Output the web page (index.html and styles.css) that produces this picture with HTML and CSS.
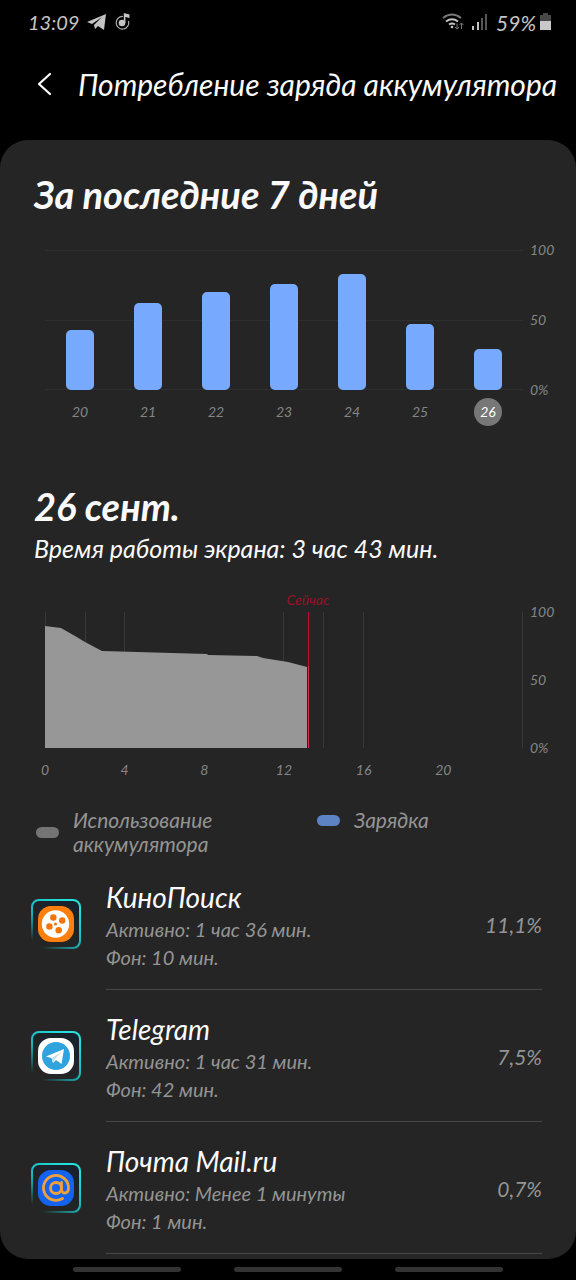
FILE: index.html
```html
<!DOCTYPE html>
<html lang="ru">
<head>
<meta charset="utf-8">
<meta name="viewport" content="width=device-width, initial-scale=1">
<title>Потребление заряда аккумулятора</title>
<link rel="stylesheet" href="styles.css">
</head>
<body>
<div class="status">
  <span class="clock">13:09</span>
  <svg class="s-icon" width="20" height="18" viewBox="0 0 20 18"><path d="M0 9 19 1 17 17 11 13 8 16 7 12 15 4 5 11Z" fill="#c4c4c4"/></svg>
  <svg class="s-icon" width="17" height="18" viewBox="0 0 17 18"><path d="M8 3.500A6.300 6.300 0 1 0 13.500 8" fill="none" stroke="#aaa" stroke-width="1.200"/><circle cx="7" cy="10" r="3.300" fill="#c4c4c4"/><path d="M8.800 10V0L14.500 1.500V5L10.400 4V10" fill="#c4c4c4"/></svg>
  <span class="spacer"></span>
  <svg class="s-icon" width="22" height="18" viewBox="0 0 22 18" fill="none" stroke-width="2"><path d="M1 5Q10-2 19 5" stroke="#777"/><path d="M4 8.500Q10 4 16 8.500" stroke="#c4c4c4"/><path d="M7 11.500Q10 9.500 13 11.500" stroke="#c4c4c4"/><circle cx="10" cy="14" r="1.300" fill="#c4c4c4"/><path d="M15 10.500V16M13 14 15 16.200 17 14M19.500 16V10M17.500 12 19.500 10 21.500 12" stroke="#777" stroke-width="1"/></svg>
  <svg class="s-icon" width="16" height="18" viewBox="0 0 16 18"><path d="M0 13H2V17H0ZM5 9H7V17H5Z" fill="#c4c4c4"/><path d="M9 5H11V17H9ZM13 1H15V17H13Z" fill="#555"/></svg>
  <span class="charge">59%</span>
  <svg width="12" height="18" viewBox="0 0 12 18"><path d="M3 0H8V2H11V9H0V2H3Z" fill="#484848"/><path d="M0 8H11V17H0Z" fill="#c8c8c8"/></svg>
</div>

<header class="bar">
  <button class="back" aria-label="Назад"><svg width="16" height="24" viewBox="0 0 16 24"><path d="M14 2 3 12 14 22" fill="none" stroke="#fff" stroke-width="2.200" stroke-linecap="round" stroke-linejoin="round"/></svg></button>
  <h1>Потребление заряда аккумулятора</h1>
</header>

<main class="card">
  <section class="week">
    <h2>За последние 7 дней</h2>
    <div class="chart">
      <div class="plot days">
        <button class="day"><span class="track"><span class="fill" style="height:43%"></span></span><span class="date">20</span></button>
        <button class="day"><span class="track"><span class="fill" style="height:62%"></span></span><span class="date">21</span></button>
        <button class="day"><span class="track"><span class="fill" style="height:70%"></span></span><span class="date">22</span></button>
        <button class="day"><span class="track"><span class="fill" style="height:76%"></span></span><span class="date">23</span></button>
        <button class="day"><span class="track"><span class="fill" style="height:83%"></span></span><span class="date">24</span></button>
        <button class="day"><span class="track"><span class="fill" style="height:47%"></span></span><span class="date">25</span></button>
        <button class="day current"><span class="track"><span class="fill" style="height:29%"></span></span><span class="date">26</span></button>
      </div>
      <div class="scale week-scale"><span>100</span><span>50</span><span>0%</span></div>
    </div>
  </section>

  <section class="today">
    <h2>26 сент.</h2>
    <p class="screen-time">Время работы экрана: 3 час 43 мин.</p>
    <div class="chart">
      <div class="plot">
        <div class="history">
          <svg class="area" viewBox="0 0 478 136" preserveAspectRatio="none">
            <path d="M0 136V14L16 16 30 24 40 30 57 39 162 42 163 43 212 44 218 46 243 50 262 55V136Z" fill="#979797"/>
            <path d="M.5 0V136M40.500 0V136M79.500 0V136M238.500 0V136M278.500 0V136M318.500 0V136M477.500 0V136" stroke="#999" stroke-opacity=".16"/>
          </svg>
          <span class="now-line"></span>
          <span class="now">Сейчас</span>
        </div>
        <div class="hours"><span>0</span><span>4</span><span>8</span><span>12</span><span>16</span><span>20</span></div>
      </div>
      <div class="scale today-scale"><span>100</span><span>50</span><span>0%</span></div>
    </div>
    <div class="legend">
      <div class="key"><span class="chip"></span><span>Использование<br>аккумулятора</span></div>
      <div class="key"><span class="chip blue"></span><span>Зарядка</span></div>
    </div>
  </section>

  <ul class="apps">
    <li>
      <svg class="app-icon" width="50" height="52" viewBox="0 0 50 52">
        <defs>
          <linearGradient id="rim" x1="0" y1="1" x2=".7" y2="0"><stop offset=".1" stop-color="#1cc" stop-opacity="0"/><stop offset=".5" stop-color="#1bb4bc"/><stop offset="1" stop-color="#25e0dc"/></linearGradient>
          <linearGradient id="plate" x1="0" y1="1" x2=".7" y2="0"><stop offset=".3" stop-color="#252525"/><stop offset="1" stop-color="#17222c"/></linearGradient>
        </defs>
        <rect x="1" y="2" width="48" height="48" rx="7" fill="url(#plate)" stroke="url(#rim)" stroke-width="2"/>
        <rect x="7" y="8" width="36" height="36" rx="13" fill="#ff7f0e"/><circle cx="24.500" cy="26" r="13.700" fill="#fff"/>
        <g fill="#f5740a"><circle cx="22.300" cy="19.500" r="3.200"/><circle cx="31.200" cy="22.500" r="3.200"/><circle cx="18.400" cy="28.500" r="3.200"/><circle cx="27.700" cy="32.200" r="3.200"/><circle cx="24.500" cy="26" r="1.500"/></g>
      </svg>
      <div class="entry"><div class="about"><h3>КиноПоиск</h3><p>Активно: 1 час 36 мин.</p><p>Фон: 10 мин.</p></div><span class="share">11,1%</span></div>
    </li>
    <li>
      <svg class="app-icon" width="50" height="52" viewBox="0 0 50 52">
        <rect x="1" y="2" width="48" height="48" rx="7" fill="url(#plate)" stroke="url(#rim)" stroke-width="2"/>
        <rect x="7" y="8" width="36" height="36" rx="13" fill="#fff"/><circle cx="25" cy="26" r="14" fill="#30a3df"/>
        <path d="M15 26.500 33 19 30.500 34 25 30 22 33 20.500 28Z" fill="#fff"/><path d="M20.500 28 31 21.500 24 29 22 33Z" fill="#c5dfee"/>
      </svg>
      <div class="entry"><div class="about"><h3>Telegram</h3><p>Активно: 1 час 31 мин.</p><p>Фон: 42 мин.</p></div><span class="share">7,5%</span></div>
    </li>
    <li>
      <svg class="app-icon" width="50" height="52" viewBox="0 0 50 52">
        <rect x="1" y="2" width="48" height="48" rx="7" fill="url(#plate)" stroke="url(#rim)" stroke-width="2"/>
        <rect x="7" y="8" width="36" height="36" rx="13" fill="#1463ef"/>
        <g fill="none" stroke="#eda13a" stroke-width="2.800" stroke-linecap="round"><circle cx="25" cy="26" r="5.500"/><path d="M30.500 20.500V27C30.500 33 37.500 32 37.500 26A12.500 12.500 0 1 0 31.500 36.500"/></g>
      </svg>
      <div class="entry"><div class="about"><h3>Почта Mail.ru</h3><p>Активно: Менее 1 минуты</p><p>Фон: 1 мин.</p></div><span class="share">0,7%</span></div>
    </li>
  </ul>
</main>

<nav class="gestures"><button aria-label="Недавние"></button><button aria-label="Домой"></button><button aria-label="Назад"></button></nav>
</body>
</html>
```
FILE: styles.css
```css
* { box-sizing: border-box; }
body {
  margin: 0;
  background: #000;
  color: #fafafa;
  font-family: Lato, "Open Sans", sans-serif;
  font-style: italic;
}
h1, h2, h3, p, ul { margin: 0; padding: 0; }
button { font: inherit; color: inherit; background: none; border: 0; padding: 0; }

.status {
  display: flex;
  align-items: center;
  height: 44px;
  padding: 0 24px 0 28px;
  color: #c4c4c4;
  font-size: 20px;
}
.s-icon { margin-left: 8px; }
.spacer { flex: 1; }
.charge { margin: 0 4px 0 8px; font-size: 21px; }

.bar {
  display: flex;
  align-items: center;
  height: 96px;
  padding: 0 16px 16px 36px;
}
.back { display: flex; flex: none; width: 42px; }
h1 { font-size: 30px; font-weight: 400; line-height: 36px; white-space: nowrap; }

.card {
  background: #252525;
  border-radius: 28px;
  padding: 30px 34px 5px;
}
h2 { font-size: 38px; font-weight: 700; line-height: 48px; white-space: nowrap; }

.chart {
  display: grid;
  grid-template-columns: 1fr 24px;
  column-gap: 7px;
  margin: 0 -12px 0 11px;
  color: #858585;
  font-size: 14px;
  line-height: 16px;
}
.scale {
  display: flex;
  flex-direction: column;
  justify-content: space-between;
  white-space: nowrap;
}
.week-scale { height: 156px; margin-top: -8px; }
.today-scale { height: 152px; margin-top: -8px; }

.week .chart { margin-top: 32px; }
.days {
  display: grid;
  grid-template-columns: repeat(7, 1fr);
  padding: 0 1px;
  background: linear-gradient(#2e2e2e 0 1px, transparent 1px 70px, #2e2e2e 70px 71px, transparent 71px 139px, #2e2e2e 139px 140px, transparent 140px);
}
.day { display: flex; flex-direction: column; align-items: center; gap: 8px; }
.track { display: flex; align-items: flex-end; height: 140px; }
.fill { width: 28px; border-radius: 5px; background: #77a9ff; }
.date {
  width: 28px;
  height: 28px;
  border-radius: 50%;
  line-height: 28px;
  text-align: center;
}
.current .date { background: #777; color: #fff; }

.today { margin-top: 56px; }
.screen-time { font-size: 25px; line-height: 32px; margin-top: 2px; white-space: nowrap; }
.today .chart { margin-top: 48px; }
.history { position: relative; height: 136px; }
.area { display: block; width: 100%; height: 100%; }
.now-line {
  position: absolute;
  left: 55%;
  top: 0;
  bottom: 0;
  width: 1px;
  background: linear-gradient(#b8102e 40%, #d8304f 40%);
}
.now {
  position: absolute;
  left: 55%;
  bottom: 100%;
  margin-bottom: 4px;
  transform: translateX(-50%);
  color: #9c1026;
  font-size: 14px;
  line-height: 16px;
}
.hours { display: grid; grid-template-columns: repeat(6, 1fr); margin-top: 14px; }
.hours span { width: 20px; margin-left: -10px; text-align: center; }

.legend {
  display: grid;
  grid-template-columns: 281px 1fr;
  align-items: start;
  margin: 30px 0 2px 2px;
  color: #949494;
  font-size: 21px;
  line-height: 24px;
}
.key { display: flex; align-items: center; gap: 14px; }
.chip { width: 23px; height: 11px; border-radius: 6px; background: #747474; }
.chip.blue { background: #5d83c4; }

.apps { list-style: none; margin: 0 0 0 -3px; }
.apps li { display: flex; align-items: center; gap: 25px; }
.entry {
  flex: 1;
  display: flex;
  align-items: center;
  justify-content: space-between;
  height: 132px;
  padding-top: 2px;
  border-bottom: 1px solid #484848;
}
h3 { font-size: 28px; font-weight: 400; line-height: 36px; }
.about p { color: #949494; font-size: 20px; line-height: 28px; }
.share { color: #949494; font-size: 21px; line-height: 28px; }

.gestures { display: flex; justify-content: center; gap: 53px; padding: 8px 0; }
.gestures button { width: 108px; height: 5px; border-radius: 3px; background: #333; }
```
